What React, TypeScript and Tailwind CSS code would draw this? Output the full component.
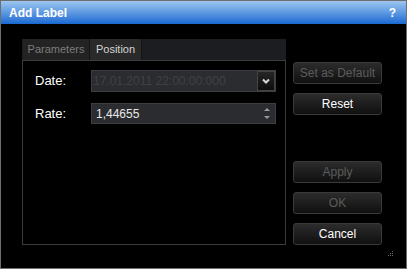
const font = { fontFamily: '"Liberation Sans", Arial, sans-serif' };

function DlgButton({ label, disabled, className = '' }: { label: string; disabled?: boolean; className?: string }) {
  return (
    <button
      className={`h-[22px] w-[89px] rounded-[3px] border border-[#3a3a3a] bg-gradient-to-b from-[#2c2c2c] to-[#101010] text-[12px] leading-none ${
        disabled ? 'text-[#5c5c5c]' : 'text-white'
      } ${className}`}
    >
      {label}
    </button>
  );
}

export default function App() {
  return (
    <div style={font} className="w-[407px] h-[269px] border border-[#6e6e6e] bg-black flex flex-col overflow-hidden">
      {/* title bar */}
      <div className="h-[23px] flex items-center justify-between pl-[8px] pr-[10px] bg-gradient-to-b from-[#9cc6ee] to-[#1769d2]">
        <span className="text-[12px] font-bold text-white">Add Label</span>
        <span className="text-[12px] font-bold text-white">?</span>
      </div>

      <div className="flex flex-1 pl-[21px] pt-[15px] relative">
        {/* tab panel */}
        <div className="w-[264px] flex flex-col">
          <div className="h-[21px] flex bg-[#1c1d20] pl-[1px]">
            <div className="w-[67px] h-full flex items-center justify-center bg-[#232324] border-r border-[#141414] text-[11px] text-[#7c7c7c]">
              Parameters
            </div>
            <div className="w-[52px] h-full flex items-center justify-center bg-[#2a2a2b] border-r border-[#141414] text-[11px] text-[#d4d4d4]">
              Position
            </div>
          </div>
          <div className="h-[185px] border border-[#3b3b42] pl-[12px] pt-[9px]">
            <div className="flex items-center h-[22px]">
              <span className="w-[56px] text-[13px] text-white">Date:</span>
              <div className="w-[185px] h-[22px] bg-[#2b2c2f] border border-[#3d3e43] flex items-center justify-between">
                <span className="pl-[1px] text-[12px] text-[#414141]">17.01.2011 22:00:00:000</span>
                <div className="w-[18px] h-[20px] bg-gradient-to-b from-[#262626] to-[#0e0e0e] border border-[#444] flex items-center justify-center">
                  <svg width="8" height="6" viewBox="0 0 8 6">
                    <polyline points="1,1.5 4,4.5 7,1.5" fill="none" stroke="#d8d8d8" strokeWidth="2" />
                  </svg>
                </div>
              </div>
            </div>
            <div className="flex items-center h-[21px] mt-[11px]">
              <span className="w-[56px] text-[13px] text-white">Rate:</span>
              <div className="w-[185px] h-[21px] bg-[#2b2c2f] border border-[#3d3e43] flex items-center justify-between">
                <span className="pl-[4px] text-[12px] text-[#e8e8e8]">1,44655</span>
                <div className="w-[14px] flex flex-col items-center gap-[5px] pr-[2px]">
                  <span className="w-0 h-0 border-l-[3px] border-r-[3px] border-b-[3px] border-l-transparent border-r-transparent border-b-[#9a9a9a]" />
                  <span className="w-0 h-0 border-l-[3px] border-r-[3px] border-t-[3px] border-l-transparent border-r-transparent border-t-[#9a9a9a]" />
                </div>
              </div>
            </div>
          </div>
        </div>

        {/* buttons */}
        <div className="ml-[7px] pt-[23px] flex flex-col">
          <DlgButton label="Set as Default" disabled />
          <DlgButton label="Reset" className="mt-[9px]" />
          <DlgButton label="Apply" disabled className="mt-[46px]" />
          <DlgButton label="OK" disabled className="mt-[9px]" />
          <DlgButton label="Cancel" className="mt-[9px]" />
        </div>

        {/* resize grip */}
        <svg className="absolute right-[12px] bottom-[11px]" width="6" height="6" viewBox="0 0 6 6">
          <rect x="4" y="0" width="1" height="1" fill="#6a6a6a" />
          <rect x="2" y="2" width="1" height="1" fill="#6a6a6a" />
          <rect x="4" y="2" width="1" height="1" fill="#6a6a6a" />
          <rect x="0" y="4" width="1" height="1" fill="#6a6a6a" />
          <rect x="2" y="4" width="1" height="1" fill="#6a6a6a" />
          <rect x="4" y="4" width="1" height="1" fill="#6a6a6a" />
        </svg>
      </div>
    </div>
  );
}
